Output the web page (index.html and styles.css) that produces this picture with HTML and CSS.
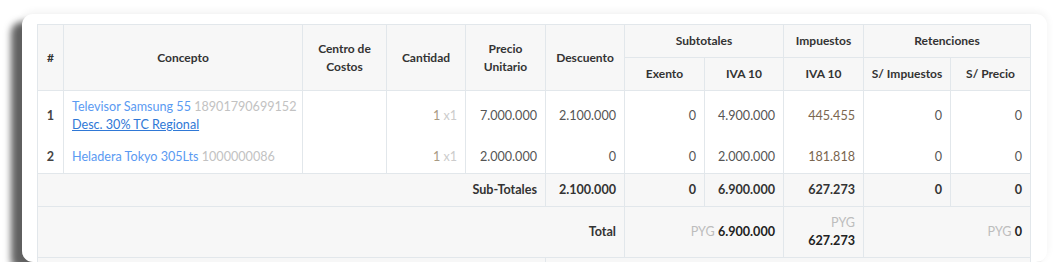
FILE: index.html
```html
<!DOCTYPE html>
<html lang="es">
<head>
<meta charset="utf-8">
<link rel="stylesheet" href="styles.css">
</head>
<body>
<div class="card">
  <table class="invoice">
    <colgroup>
      <col class="c-num"><col class="c-concept"><col class="c-cc"><col class="c-qty"><col class="c-price"><col class="c-disc">
      <col class="c-ex"><col class="c-iva"><col class="c-tax"><col class="c-rimp"><col class="c-rpre">
    </colgroup>
    <thead>
      <tr>
        <th rowspan="2">#</th>
        <th rowspan="2">Concepto</th>
        <th rowspan="2">Centro de<br>Costos</th>
        <th rowspan="2">Cantidad</th>
        <th rowspan="2">Precio<br>Unitario</th>
        <th rowspan="2">Descuento</th>
        <th colspan="2">Subtotales</th>
        <th>Impuestos</th>
        <th colspan="2">Retenciones</th>
      </tr>
      <tr>
        <th>Exento</th>
        <th>IVA 10</th>
        <th>IVA 10</th>
        <th>S/ Impuestos</th>
        <th>S/ Precio</th>
      </tr>
    </thead>
    <tbody>
      <tr class="item">
        <td class="num">1</td>
        <td class="concept"><a class="prod" href="#">Televisor Samsung 55</a> <span class="code">18901790699152</span><br><a class="disc" href="#">Desc. 30% TC Regional</a></td>
        <td></td>
        <td class="r"><span class="qty">1</span> <span class="mult">x1</span></td>
        <td class="r">7.000.000</td>
        <td class="r">2.100.000</td>
        <td class="r">0</td>
        <td class="r">4.900.000</td>
        <td class="r tax">445.455</td>
        <td class="r">0</td>
        <td class="r">0</td>
      </tr>
      <tr class="item second">
        <td class="num">2</td>
        <td class="concept"><a class="prod" href="#">Heladera Tokyo 305Lts</a> <span class="code">1000000086</span></td>
        <td></td>
        <td class="r"><span class="qty">1</span> <span class="mult">x1</span></td>
        <td class="r">2.000.000</td>
        <td class="r">0</td>
        <td class="r">0</td>
        <td class="r">2.000.000</td>
        <td class="r tax">181.818</td>
        <td class="r">0</td>
        <td class="r">0</td>
      </tr>
      <tr class="sum">
        <td colspan="5" class="r b">Sub-Totales</td>
        <td class="r b">2.100.000</td>
        <td class="r b">0</td>
        <td class="r b">6.900.000</td>
        <td class="r b">627.273</td>
        <td class="r b">0</td>
        <td class="r b">0</td>
      </tr>
      <tr class="sum">
        <td colspan="6" class="r b">Total</td>
        <td colspan="2" class="r"><span class="cur">PYG</span> <b>6.900.000</b></td>
        <td class="r"><span class="cur">PYG</span><br><b>627.273</b></td>
        <td colspan="2" class="r"><span class="cur">PYG</span> <b>0</b></td>
      </tr>
      <tr class="extra">
        <td colspan="5">&nbsp;</td>
        <td colspan="6">&nbsp;</td>
      </tr>
    </tbody>
  </table>
</div>
</body>
</html>
```
FILE: styles.css
```css
html, body {
  margin: 0;
  padding: 0;
  background: #ffffff;
}
body {
  padding: 14px 0 0 22px;
  font-family: "Lato", "Liberation Sans", sans-serif;
  font-size: 12.6px;
  color: #555;
}
.card {
  width: 1025px;
  height: 248px;
  box-sizing: border-box;
  padding: 10px 17px 0 15px;
  background: #fff;
  border-radius: 11px;
  overflow: hidden;
  box-shadow: -11px 8px 7px rgba(0, 0, 0, 0.62), 0 -2px 8px rgba(0, 0, 0, 0.06);
}
.invoice {
  width: 993px;
  border-collapse: collapse;
  table-layout: fixed;
}
.c-num { width: 26px; }
.c-concept { width: 239px; }
.c-cc { width: 84px; }
.c-qty { width: 79px; }
.c-price { width: 80px; }
.c-disc { width: 79px; }
.c-ex { width: 80px; }
.c-iva { width: 79px; }
.c-tax { width: 80px; }
.c-rimp { width: 87px; }
.c-rpre { width: 80px; }

.invoice th,
.invoice td {
  border: 1px solid #e2e7eb;
  padding: 7px 8px;
  line-height: 18px;
  vertical-align: middle;
  white-space: nowrap;
}
.invoice th {
  background: #f7f7f7;
  color: #333;
  font-weight: 700;
  text-align: center;
  font-size: 12px;
  padding: 7px 4px;
}
.invoice td { background: #fff; }
.invoice .num {
  text-align: center;
  font-weight: 700;
  color: #444;
  padding: 7px 0;
}
.prod {
  color: #5a9af2;
  text-decoration: none;
}
.code { color: #c2c2c2; }
.disc {
  color: #2f78d6;
  text-decoration: underline;
}
.r { text-align: right; }
.qty { color: #a89a84; }
.mult { color: #cccccc; }
.tax { color: #7a6650; }
.item.second td { border-top: none; }
.item td { border-bottom: none; }
.sum td { background: #f7f7f7; color: #333; border-top: 1px solid #e2e7eb; }
.b, .invoice b { font-weight: 700; color: #222; }
.cur { color: #bdbdbd; }
.extra td { background: #f7f7f7; }
```
